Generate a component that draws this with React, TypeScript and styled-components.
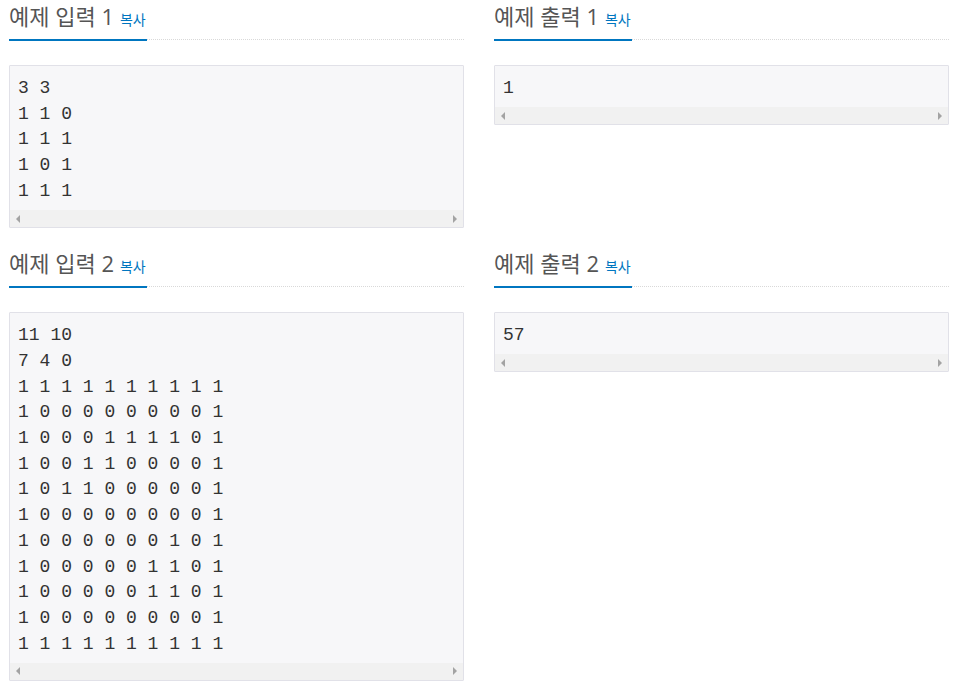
import React from "react";
import styled, { createGlobalStyle } from "styled-components";

const GlobalStyle = createGlobalStyle`
  html, body { margin: 0; padding: 0; background: #fff; }
  body { font-family: "Open Sans", "Noto Sans CJK KR", sans-serif; color: #333; }
`;

const Page = styled.div`
  display: grid;
  grid-template-columns: 455px 455px;
  column-gap: 30px;
  row-gap: 19px;
  padding: 0 10px 8px 9px;
  align-items: start;
`;

const Section = styled.section`
  min-width: 0;
`;

const Header = styled.div`
  display: flex;
  border-bottom: 1px dotted #d9d9d9;
  margin-bottom: 25px;
`;

const Title = styled.h2`
  margin: 0 0 -2px;
  padding: 0 1px 7px 0;
  font-size: 22px;
  line-height: 32px;
  height: 32px;
  font-weight: 400;
  color: #555;
  border-bottom: 2px solid #0076c0;
  white-space: nowrap;
`;

const CopyLink = styled.a`
  margin-left: 6px;
  font-size: 14px;
  line-height: 1;
  color: #0076c0;
  text-decoration: none;
  cursor: pointer;
`;

const Sample = styled.div`
  border: 1px solid #e1e1e8;
  background: #f7f7f9;
  border-radius: 1px;
  overflow: hidden;
`;

const Code = styled.pre`
  margin: 0;
  padding: 10px 8px 5.5px;
  font-family: "Liberation Mono", "DejaVu Sans Mono", monospace;
  font-size: 18px;
  line-height: 25.714px;
  color: #333;
  white-space: pre;
  overflow: hidden;
`;

const ScrollTrack = styled.div`
  height: 17px;
  background: #f1f1f1;
  display: flex;
  justify-content: space-between;
  align-items: center;
  padding: 0 6px;
`;

const Arrow = styled.span<{ $dir: "left" | "right" }>`
  width: 0;
  height: 0;
  border-top: 4px solid transparent;
  border-bottom: 4px solid transparent;
  ${(p) =>
    p.$dir === "left"
      ? "border-right: 4px solid #a3a3a3;"
      : "border-left: 4px solid #a3a3a3;"}
`;

type Item = { label: string; data: string };

const items: Item[] = [
  { label: "예제 입력 1", data: "3 3\n1 1 0\n1 1 1\n1 0 1\n1 1 1" },
  { label: "예제 출력 1", data: "1" },
  {
    label: "예제 입력 2",
    data: [
      "11 10",
      "7 4 0",
      "1 1 1 1 1 1 1 1 1 1",
      "1 0 0 0 0 0 0 0 0 1",
      "1 0 0 0 1 1 1 1 0 1",
      "1 0 0 1 1 0 0 0 0 1",
      "1 0 1 1 0 0 0 0 0 1",
      "1 0 0 0 0 0 0 0 0 1",
      "1 0 0 0 0 0 0 1 0 1",
      "1 0 0 0 0 0 1 1 0 1",
      "1 0 0 0 0 0 1 1 0 1",
      "1 0 0 0 0 0 0 0 0 1",
      "1 1 1 1 1 1 1 1 1 1",
    ].join("\n"),
  },
  { label: "예제 출력 2", data: "57" },
];

function SampleBlock({ label, data }: Item) {
  return (
    <Section>
      <Header>
        <Title>
          {label}
          <CopyLink>복사</CopyLink>
        </Title>
      </Header>
      <Sample>
        <Code>{data}</Code>
        <ScrollTrack>
          <Arrow $dir="left" />
          <Arrow $dir="right" />
        </ScrollTrack>
      </Sample>
    </Section>
  );
}

export default function App() {
  return (
    <>
      <GlobalStyle />
      <Page>
        {items.map((it) => (
          <SampleBlock key={it.label} {...it} />
        ))}
      </Page>
    </>
  );
}
